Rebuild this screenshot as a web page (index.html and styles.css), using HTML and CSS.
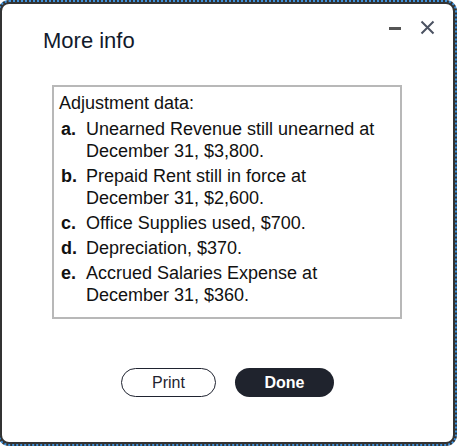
FILE: index.html
```html
<!DOCTYPE html>
<html>
<head>
<meta charset="utf-8">
<link rel="stylesheet" href="styles.css">
</head>
<body>
<div class="frame">
<div class="dialog">
  <div class="header">
    <h1 class="title">More info</h1>
    <div class="controls">
      <span class="minimize"></span>
      <svg class="close" width="15" height="15" viewBox="0 0 15 15"><path d="M1.5 1.5 L13.5 13.5 M13.5 1.5 L1.5 13.5" stroke="#4b5262" stroke-width="2" fill="none"/></svg>
    </div>
  </div>
  <div class="box">
    <div class="heading">Adjustment data:</div>
    <ol class="items">
      <li><b>a.</b><span>Unearned Revenue still unearned at December 31, $3,800.</span></li>
      <li><b>b.</b><span>Prepaid Rent still in force at December 31, $2,600.</span></li>
      <li><b>c.</b><span>Office Supplies used, $700.</span></li>
      <li><b>d.</b><span>Depreciation, $370.</span></li>
      <li><b>e.</b><span>Accrued Salaries Expense at December 31, $360.</span></li>
    </ol>
  </div>
  <div class="actions">
    <button class="btn print">Print</button>
    <button class="btn done">Done</button>
  </div>
</div>
</div>
</body>
</html>
```
FILE: styles.css
```css
html, body { margin: 0; padding: 0; background: #fff; }
body { font-family: "Liberation Sans", Arial, sans-serif; overflow: hidden; }
.frame {
  box-sizing: border-box;
  width: 459px;
  height: 446px;
  margin-left: -2px;
  border: 2px dotted #3d91dc;
  border-radius: 11px;
  background: #333;
  padding: 2px;
}
.dialog {
  box-sizing: border-box;
  width: 451px;
  height: 438px;
  border-radius: 7px;
  background: #fff;
}
.header {
  display: flex;
  justify-content: space-between;
  align-items: flex-start;
  padding: 16px 18px 0 41px;
}
.title {
  margin: 8px 0 0 0;
  font-size: 22px;
  line-height: 26px;
  font-weight: normal;
  color: #111a2c;
}
.controls {
  display: flex;
  align-items: center;
  gap: 19px;
  height: 15px;
}
.minimize {
  display: block;
  width: 12px;
  height: 3px;
  background: #555;
  margin-top: 2px;
}
.close { display: block; }
.box {
  box-sizing: border-box;
  width: 350px;
  height: 234px;
  margin: 31px 0 0 50px;
  border: 2px solid #b8b8b8;
  padding: 5px 20px 0 5px;
  font-size: 18px;
  line-height: 22px;
  color: #111;
}
.heading { margin-bottom: 4px; }
.items { list-style: none; margin: 0; padding: 0 0 0 2px; }
.items li { display: grid; grid-template-columns: 25px 1fr; margin-bottom: 3px; }
.items b { font-weight: bold; }
.actions {
  display: flex;
  justify-content: center;
  gap: 19px;
  margin-top: 49px;
}
.btn {
  box-sizing: border-box;
  height: 29px;
  border-radius: 15px;
  font-family: "Liberation Sans", Arial, sans-serif;
  font-size: 16px;
  padding: 0;
}
.print {
  width: 95px;
  background: #fff;
  border: 1.5px solid #1f2330;
  color: #1f2330;
}
.done {
  width: 99px;
  background: #1f232d;
  border: none;
  color: #fff;
  font-weight: bold;
}
```
